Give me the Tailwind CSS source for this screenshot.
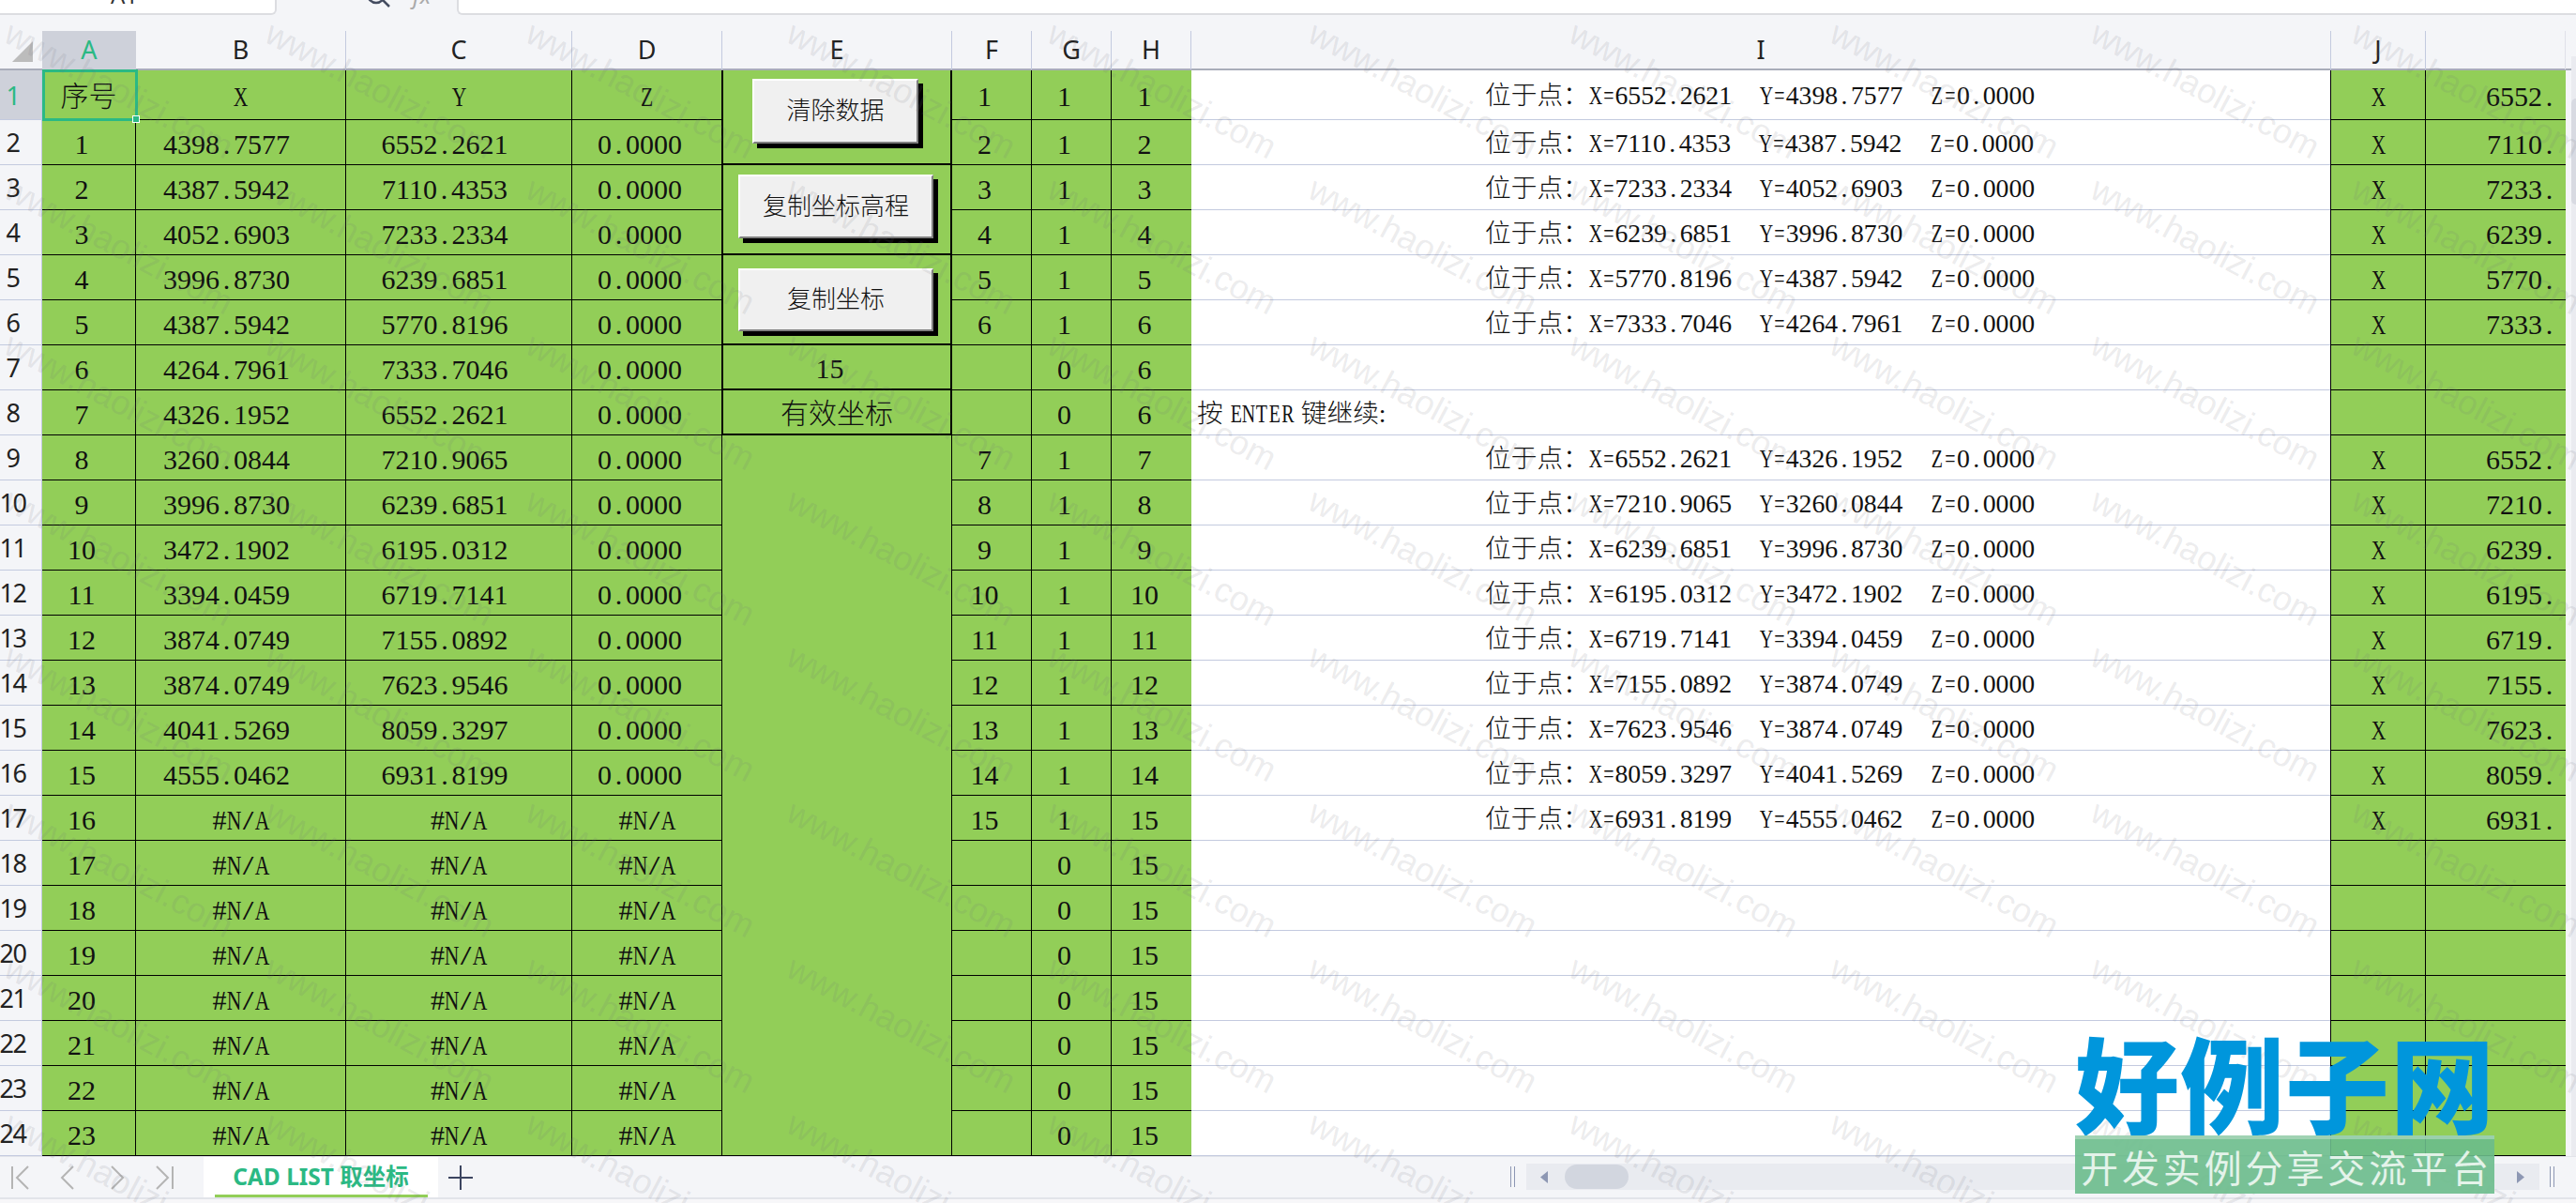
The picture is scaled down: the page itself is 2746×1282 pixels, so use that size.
<!DOCTYPE html>
<html lang="zh-CN">
<head>
    <meta charset="UTF-8">
    <title>CAD LIST 取坐标</title>
    <script src="https://cdn.jsdelivr.net/npm/@tailwindcss/browser@4"></script>
</head>
<body class="w-[2746px] h-[1282px] overflow-hidden bg-[#f4f5f8]">
<div class="relative w-[2746px] h-[1282px] overflow-hidden flex flex-col">

    <!-- formula bar, only its bottom edge is in view -->
    <div class="h-4 flex font-['Noto_Sans','Noto_Sans_CJK_SC',sans-serif] text-[24px] leading-none text-[#333]">
        <div class="w-[295px] bg-white rounded-br-md border-r-2 border-b-2 border-[#dcdde1] overflow-hidden">
            <div class="pl-[118px] -mt-[17px]">A1</div>
        </div>
        <div class="w-[192px] bg-[#f4f5f8] overflow-hidden relative">
            <svg class="absolute left-[96px] -top-[10px]" width="30" height="24" viewBox="0 0 30 24" fill="none" stroke="#444c60" stroke-width="2.5"><circle cx="10" cy="4" r="9"/><path d="M17 10l7 7"/></svg>
            <div class="pl-[145px] -mt-[17px] text-[#aaa] italic">fx</div>
        </div>
        <div class="flex-1 bg-white rounded-bl-md border-l-2 border-b-2 border-[#dcdde1]"></div>
    </div>

    <!-- column letters -->
    <div class="h-[59px] pt-[17px] grid grid-cols-[45px_100px_224px_241px_160px_245px_85px_85px_85px_1215px_101px_149px_11px] border-b-2 border-[#a9adba] font-['Noto_Sans',sans-serif] text-[27px] text-[#222]">
        <div class="relative">
            <div class="absolute left-[13px] top-[11px] w-[22px] h-[22px] bg-[#bcbcbc] [clip-path:polygon(100%_0,100%_100%,0_100%)]"></div>
        </div>
        <div class="flex items-center justify-center bg-[#ced1da] text-[#2bb984]">A</div>
        <div class="flex items-center justify-center border-r border-[#c3cadf]">B</div>
        <div class="flex items-center justify-center border-r border-[#c3cadf]">C</div>
        <div class="flex items-center justify-center border-r border-[#c3cadf]">D</div>
        <div class="flex items-center justify-center border-r border-[#c3cadf]">E</div>
        <div class="flex items-center justify-center border-r border-[#c3cadf]">F</div>
        <div class="flex items-center justify-center border-r border-[#c3cadf]">G</div>
        <div class="flex items-center justify-center border-r border-[#c3cadf]">H</div>
        <div class="flex items-center justify-center border-r border-[#c3cadf]">I</div>
        <div class="flex items-center justify-center border-r border-[#c3cadf]">J</div>
        <div class="border-r border-[#dfe1e8]"></div>
        <div></div>
    </div>

    <!-- sheet and vertical scrollbar -->
    <div class="flex h-[1157px]">
        <div id="sheet" class="relative w-[2735px] grid grid-cols-[45px_100px_224px_241px_160px_245px_85px_85px_85px_1215px_101px_149px] grid-rows-[53px_repeat(23,48px)] font-['Liberation_Serif','Noto_Sans_CJK_SC',serif] font-light text-[30px] leading-none text-[#111]"></div>
        <div class="w-[11px] pl-[6px]">
            <div class="relative -mt-[15px] h-[1172px] bg-[#eaebf0] pt-[45px]">
                <div class="h-[113px] bg-[#d8dae2] rounded-l-md"></div>
            </div>
        </div>
    </div>

    <!-- sheet tabs and horizontal scrollbar -->
    <div class="h-[46px] flex items-start border-t border-b-2 border-[#e2e4ea] bg-[#f4f5f8]">
        <div class="w-[217px] h-[43px] flex items-center">
            <svg width="217" height="43" viewBox="0 0 217 43" fill="none" stroke="#b4b4b4" stroke-width="2">
                <path d="M13 10v24M30 10L18 22l12 12"/>
                <path d="M78 10L66 22l12 12"/>
                <path d="M119 10l12 12-12 12"/>
                <path d="M167 10l12 12-12 12M184 10v24"/>
            </svg>
        </div>
        <div class="relative w-[250px] h-[43px] bg-white flex items-center justify-center font-['Noto_Sans','Noto_Sans_CJK_SC',sans-serif] font-bold text-[24.5px] text-[#2bb984]">
            CAD LIST 取坐标
            <div class="absolute left-[12px] right-[11px] bottom-0 h-[3px] bg-[#92ce58]"></div>
        </div>
        <svg class="ml-[11px] mt-[9px]" width="26" height="26" viewBox="0 0 26 26" fill="none" stroke="#3c4560" stroke-width="2"><path d="M13 0v26M0 13h26"/></svg>
        <div class="ml-[1106px] mt-[10px] w-[5px] h-[22px] border-x border-[#8d97b3]"></div>
        <div class="ml-[12px] mt-[7px] w-[1080px] h-[28px] bg-[#e9ebf0] flex items-center">
            <svg class="ml-[15px]" width="8" height="13" viewBox="0 0 8 13" fill="#8d97b3"><path d="M8 0v13L0 6.5z"/></svg>
            <div class="ml-[18px] w-[68px] h-[26px] bg-[#d2d6df] rounded-[13px]"></div>
            <svg class="ml-auto mr-[16px]" width="8" height="13" viewBox="0 0 8 13" fill="#8d97b3"><path d="M0 0v13l8-6.5z"/></svg>
        </div>
        <div class="ml-[11px] mt-[10px] w-[5px] h-[22px] border-x border-[#8d97b3]"></div>
    </div>
    <div class="flex-1 bg-[#f7f7f9]"></div>

    <!-- A1 selection box -->
    <div class="absolute left-[45px] top-[74px] w-[102px] h-[55px] border-[3px] border-[#2bb984]">
        <div class="absolute -right-[4px] -bottom-[4px] w-[6px] h-[6px] bg-[#2bb984] outline outline-white"></div>
    </div>

    <!-- buttons sit on top of the merged E cells -->
    <button class="absolute left-[802px] top-[84px] w-[177px] h-[69px] bg-[#f0f0f0] border-2 border-t-white border-l-white border-r-[#808080] border-b-[#808080] shadow-[5px_5px_0_#000] font-['Liberation_Serif','Noto_Sans_CJK_SC',serif] font-light text-[26px] text-[#111]">清除数据</button>
    <button class="absolute left-[787px] top-[186px] w-[208px] h-[68px] bg-[#f0f0f0] border-2 border-t-white border-l-white border-r-[#808080] border-b-[#808080] shadow-[5px_5px_0_#000] font-['Liberation_Serif','Noto_Sans_CJK_SC',serif] font-light text-[26px] text-[#111]">复制坐标高程</button>
    <button class="absolute left-[787px] top-[286px] w-[208px] h-[67px] bg-[#f0f0f0] border-2 border-t-white border-l-white border-r-[#808080] border-b-[#808080] shadow-[5px_5px_0_#000] font-['Liberation_Serif','Noto_Sans_CJK_SC',serif] font-light text-[26px] text-[#111]">复制坐标</button>

    <!-- repeated watermark -->
    <div id="watermark" class="absolute left-[16px] top-[17px] grid grid-cols-[repeat(10,278px)] auto-rows-[166px] pointer-events-none font-['Liberation_Sans',sans-serif] text-[36.5px] leading-none text-[#70727c]/15"></div>

    <!-- site logo pasted over the corner -->
    <div class="absolute left-[2212px] top-[1096px] w-[447px] h-[176px] flex flex-col items-stretch pointer-events-none">
        <div class="h-[117px] -mt-[3px] flex items-center justify-between font-['Noto_Sans_CJK_SC',sans-serif] font-black text-[111px] leading-none text-[#0096dc]"><span>好</span><span>例</span><span>子</span><span>网</span></div>
        <div class="h-[62px] bg-[#6cbd8c]/90 border-t-4 border-[#b9dcc6]/60 flex items-center justify-between px-[6px] font-['Noto_Sans_CJK_SC',sans-serif] text-[40px] leading-none text-white/80"><span>开</span><span>发</span><span>实</span><span>例</span><span>分</span><span>享</span><span>交</span><span>流</span><span>平</span><span>台</span></div>
    </div>
</div>

<script>
    // rows 1..24, columns A..D values
    const coords = [
        ['4398.7577', '6552.2621'], ['4387.5942', '7110.4353'], ['4052.6903', '7233.2334'],
        ['3996.8730', '6239.6851'], ['4387.5942', '5770.8196'], ['4264.7961', '7333.7046'],
        ['4326.1952', '6552.2621'], ['3260.0844', '7210.9065'], ['3996.8730', '6239.6851'],
        ['3472.1902', '6195.0312'], ['3394.0459', '6719.7141'], ['3874.0749', '7155.0892'],
        ['3874.0749', '7623.9546'], ['4041.5269', '8059.3297'], ['4555.0462', '6931.8199']
    ];
    const listed = [
        ['6552.2621', '4398.7577'], ['7110.4353', '4387.5942'], ['7233.2334', '4052.6903'],
        ['6239.6851', '3996.8730'], ['5770.8196', '4387.5942'], ['7333.7046', '4264.7961'],
        null, null,
        ['6552.2621', '4326.1952'], ['7210.9065', '3260.0844'], ['6239.6851', '3996.8730'],
        ['6195.0312', '3472.1902'], ['6719.7141', '3394.0459'], ['7155.0892', '3874.0749'],
        ['7623.9546', '3874.0749'], ['8059.3297', '4041.5269'], ['6931.8199', '4555.0462']
    ];

    // the sheet uses a half-width font, so squeeze every non digit into one digit's width
    function mono(s) {
        return s.replace(/[^0-9\s\u4e00-\u9fff：]/g, c => {
            if (/[A-Z=]/.test(c)) return `<span class="inline-flex w-[1ch] justify-center scale-x-[.72]">${c}</span>`;
            if (c === '/') return `<span class="inline-flex w-[1ch] justify-center scale-x-[1.4]">${c}</span>`;
            return `<span class="inline-flex w-[1ch] justify-center">${c}</span>`;
        });
    }

    const green = 'bg-[#92ce58] border-r border-b border-black flex items-center justify-center pt-[4px]';
    const cell = (text, pad = '') => `<div class="${green} ${pad}">${text}</div>`;
    const num = text => cell(mono(text), 'pr-[15px]');
    const wide = text => cell(mono(text), 'pr-[30px]');

    const eCol = {
        1: '<div class="row-span-2 bg-[#92ce58] border-r-2 border-b-2 border-l border-black"></div>',
        3: '<div class="row-span-2 bg-[#92ce58] border-r-2 border-b-2 border-l border-black"></div>',
        5: '<div class="row-span-2 bg-[#92ce58] border-r-2 border-b-2 border-l border-black"></div>',
        7: `<div class="bg-[#92ce58] border-r-2 border-b-2 border-l border-black flex items-center justify-center pt-[4px] pr-[15px]">15</div>`,
        8: '<div class="bg-[#92ce58] border-r-2 border-b-2 border-l border-black flex items-center justify-center pt-[3px]">有效坐标</div>',
        9: '<div class="row-span-16 bg-[#92ce58] border-r border-b border-black"></div>'
    };

    let html = '';
    let f = 0;
    for (let r = 1; r <= 24; r++) {
        const active = r === 1;
        html += `<div class="${active ? 'bg-[#ced1da] text-[#2bb984]' : 'text-[#222]'} border-b border-r border-[#c3cadf] flex items-center justify-center pr-[17px] tracking-[-1.5px] font-['Noto_Sans',sans-serif] font-normal text-[27px]">${r}</div>`;

        if (r === 1) {
            html += cell('序号') + cell(mono('X')) + cell(mono('Y')) + cell(mono('Z'));
        } else {
            const c = coords[r - 2];
            html += num(String(r - 1));
            if (c) html += wide(c[0]) + wide(c[1]) + num('0.0000');
            else html += cell(mono('#N/A')) + cell(mono('#N/A')) + cell(mono('#N/A'));
        }

        if (eCol[r]) html += eCol[r];

        const line = listed[r - 1];
        if (line) f++;
        html += line ? num(String(f)) : cell('');
        html += num(line ? '1' : '0');
        html += `<div class="bg-[#92ce58] border-b border-black flex items-center justify-center pt-[4px] pr-[15px]">${mono(String(f))}</div>`;

        // column I
        const iText = line
            ? `<span class="pl-[313px]">位于点：${mono('X=' + line[0])}<span class="pl-[30px]">${mono('Y=' + line[1])}</span><span class="pl-[30px]">${mono('Z=0.0000')}</span></span>`
            : r === 8 ? `<span class="pl-[6px]">按 ${mono('ENTER')} 键继续:</span>` : '';
        html += `<div class="bg-white border-r border-black flex items-center pt-[2px] text-[27.7px]"><div class="w-full h-full flex items-center border-b border-[#c3cadf] -mr-px">${iText}</div></div>`;

        html += cell(line ? mono('X') : '');
        html += `<div class="bg-[#92ce58] border-b border-black flex items-center justify-end pt-[4px] pr-[10px]">${line ? mono(line[0].slice(0, 5)) : ''}</div>`;
    }
    document.getElementById('sheet').innerHTML = html;

    const marks = [];
    for (let i = 0; i < 80; i++) {
        marks.push('<div class="origin-top-left rotate-[28deg] whitespace-nowrap">www.haolizi.com</div>');
    }
    document.getElementById('watermark').innerHTML = marks.join('');
</script>
</body>
</html>
